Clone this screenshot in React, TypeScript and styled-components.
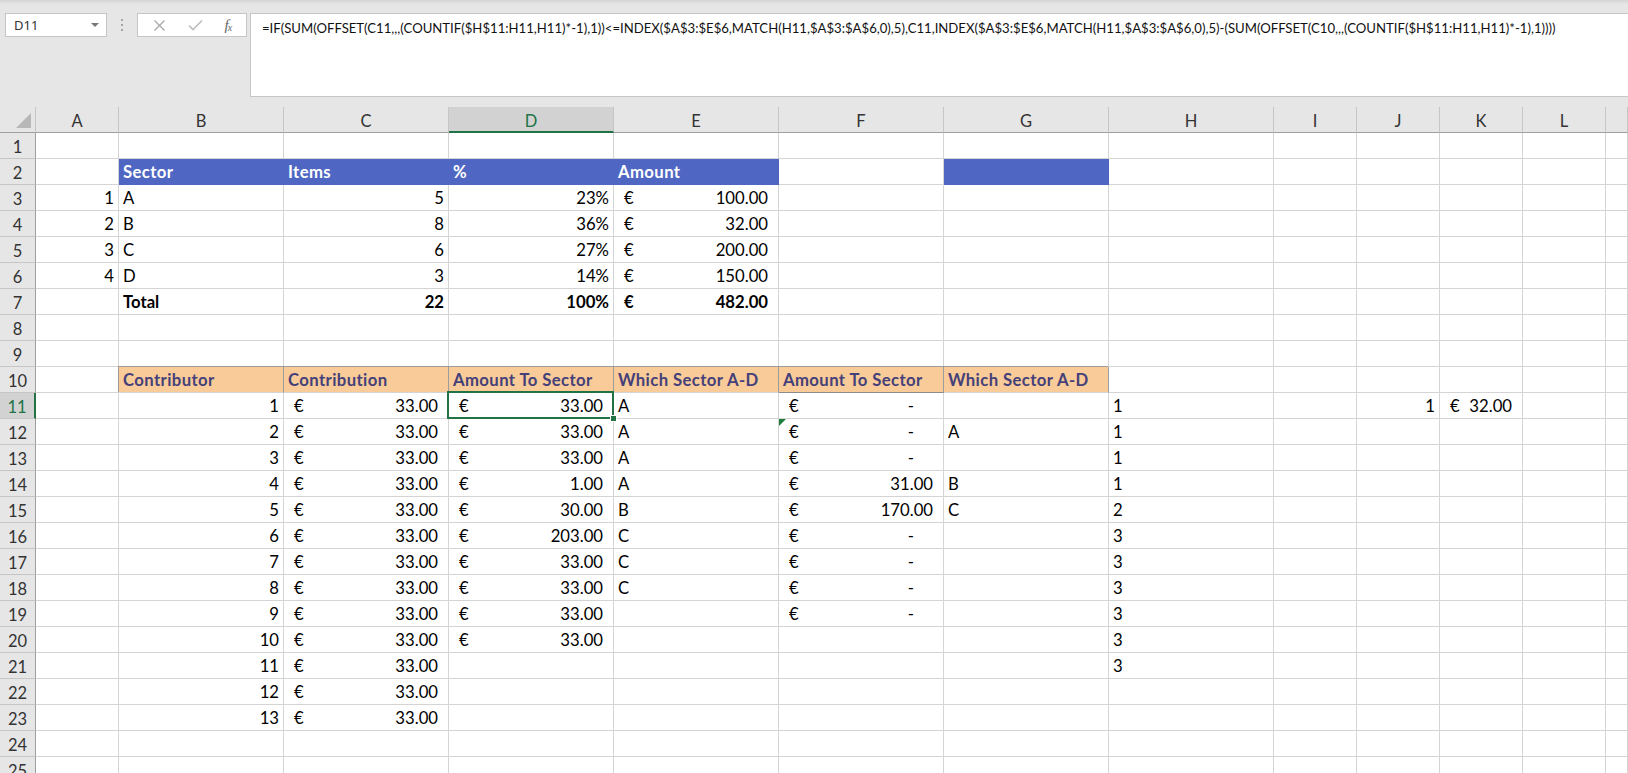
import React from 'react';
import styled, { createGlobalStyle, css } from 'styled-components';

const GlobalStyle = createGlobalStyle`
  html, body {
    margin: 0;
    padding: 0;
    background: #e6e6e6;
  }
  body {
    font-family: Lato, 'Liberation Sans', sans-serif;
  }
`;

const GREEN = '#217346';
const GRID = '#d4d4d4';

const COLUMNS = ['A', 'B', 'C', 'D', 'E', 'F', 'G', 'H', 'I', 'J', 'K', 'L', 'M'];
// M is only a sliver at the right edge of the window
const WIDTHS: Record<string, number> = {
  A: 83, B: 165, C: 165, D: 165, E: 165, F: 165, G: 165, H: 165, I: 83, J: 83, K: 83, L: 83, M: 22,
};
const ROW_COUNT = 25;
const ACTIVE_COL = 'D';
const ACTIVE_ROW = 11;

const FORMULA =
  '=IF(SUM(OFFSET(C11,,,(COUNTIF($H$11:H11,H11)*-1),1))<=INDEX($A$3:$E$6,MATCH(H11,$A$3:$A$6,0),5),C11,INDEX($A$3:$E$6,MATCH(H11,$A$3:$A$6,0),5)-(SUM(OFFSET(C10,,,(COUNTIF($H$11:H11,H11)*-1),1))))';

type Kind = 'text' | 'num' | 'acct' | 'dash';
type Fill = 'blue' | 'orange';

interface CellData {
  v?: string;
  kind?: Kind;
  bold?: boolean;
  fill?: Fill;
  boxed?: boolean;
  flag?: boolean;
}

// sheet content, keyed by row then column
const data: Record<number, Record<string, CellData>> = {
  2: {
    B: { v: 'Sector', bold: true, fill: 'blue' },
    C: { v: 'Items', bold: true, fill: 'blue' },
    D: { v: '%', bold: true, fill: 'blue' },
    E: { v: 'Amount', bold: true, fill: 'blue' },
    G: { fill: 'blue' },
  },
  7: {
    B: { v: 'Total', bold: true },
    C: { v: '22', kind: 'num', bold: true },
    D: { v: '100%', kind: 'num', bold: true },
    E: { v: '482.00', kind: 'acct', bold: true },
  },
  10: {
    B: { v: 'Contributor', bold: true, fill: 'orange' },
    C: { v: 'Contribution', bold: true, fill: 'orange' },
    D: { v: 'Amount To Sector', bold: true, fill: 'orange' },
    E: { v: 'Which Sector A-D', bold: true, fill: 'orange' },
    F: { v: 'Amount To Sector', bold: true, fill: 'orange', boxed: true },
    G: { v: 'Which Sector A-D', bold: true, fill: 'orange' },
  },
};

const sectors = [
  ['A', '5', '23%', '100.00'],
  ['B', '8', '36%', '32.00'],
  ['C', '6', '27%', '200.00'],
  ['D', '3', '14%', '150.00'],
];
sectors.forEach(([s, items, pct, amount], i) => {
  data[3 + i] = {
    A: { v: String(i + 1), kind: 'num' },
    B: { v: s },
    C: { v: items, kind: 'num' },
    D: { v: pct, kind: 'num' },
    E: { v: amount, kind: 'acct' },
  };
});

const toSector = ['33.00', '33.00', '33.00', '1.00', '30.00', '203.00', '33.00', '33.00', '33.00', '33.00'];
const whichSector = ['A', 'A', 'A', 'A', 'B', 'C', 'C', 'C'];
const secondAmount = ['', '', '', '31.00', '170.00', '', '', '', ''];
const secondSector: Record<number, string> = { 12: 'A', 14: 'B', 15: 'C' };
const hValues = ['1', '1', '1', '1', '2', '3', '3', '3', '3', '3', '3'];

for (let r = 11; r <= 23; r += 1) {
  const i = r - 11;
  const row: Record<string, CellData> = {
    B: { v: String(i + 1), kind: 'num' },
    C: { v: '33.00', kind: 'acct' },
  };
  if (toSector[i]) row.D = { v: toSector[i], kind: 'acct' };
  if (whichSector[i]) row.E = { v: whichSector[i] };
  if (i < secondAmount.length) {
    row.F = secondAmount[i]
      ? { v: secondAmount[i], kind: 'acct' }
      : { kind: 'dash', flag: r === 12 };
  }
  if (secondSector[r]) row.G = { v: secondSector[r] };
  if (hValues[i]) row.H = { v: hValues[i] };
  data[r] = row;
}
data[11].J = { v: '1', kind: 'num' };
data[11].K = { v: '32.00', kind: 'acct' };

/* ---------- toolbar ---------- */

const Page = styled.div`
  width: 1628px;
  height: 773px;
  overflow: hidden;
  background: #e6e6e6;
`;

const Toolbar = styled.div`
  height: 107px;
  box-sizing: border-box;
  display: flex;
  align-items: flex-start;
  padding: 13px 0 0 5px;
  background: linear-gradient(#d3d3d3 0, #e2e2e2 3px, #e6e6e6 5px);
`;

const NameBox = styled.div`
  width: 102px;
  height: 24px;
  box-sizing: border-box;
  background: #fff;
  border: 1px solid #c6c6c6;
  display: flex;
  align-items: center;
  justify-content: space-between;
  padding: 0 7px 0 8px;
  font-family: 'Noto Sans', 'Open Sans', sans-serif;
  font-size: 13px;
  color: #333;
`;

const DropArrow = styled.span`
  width: 0;
  height: 0;
  border-left: 4px solid transparent;
  border-right: 4px solid transparent;
  border-top: 4px solid #777;
`;

const Grip = styled.div`
  width: 30px;
  height: 24px;
  display: flex;
  flex-direction: column;
  align-items: center;
  justify-content: center;
  gap: 3px;

  span {
    width: 2px;
    height: 2px;
    background: #a6a6a6;
  }
`;

const ButtonBox = styled.div`
  width: 110px;
  height: 24px;
  box-sizing: border-box;
  background: #fff;
  border: 1px solid #c6c6c6;
  display: flex;
  align-items: center;
  justify-content: space-around;
  padding: 0 4px;
`;

const FxLabel = styled.span`
  font-family: 'Liberation Serif', serif;
  font-style: italic;
  font-size: 15px;
  color: #666;
  letter-spacing: -1px;

  sub {
    font-size: 10px;
    vertical-align: -1px;
  }
`;

const FormulaBox = styled.div`
  flex: 1;
  height: 84px;
  margin-left: 3px;
  box-sizing: border-box;
  background: #fff;
  border: 1px solid #c6c6c6;
  border-right: none;
  padding: 6px 0 0 11px;
  font-size: 13.15px;
  line-height: 16px;
  color: #111;
  white-space: nowrap;
  overflow: hidden;
`;

/* ---------- sheet ---------- */

const Sheet = styled.div`
  display: grid;
  grid-template-columns: 36px ${COLUMNS.map((c) => `${WIDTHS[c]}px`).join(' ')};
  grid-auto-rows: 26px;
  background: #fff;
`;

const headerBase = css`
  box-sizing: border-box;
  display: flex;
  align-items: center;
  justify-content: center;
  font-size: 16.5px;
  background: #e6e6e6;
  color: #333;
`;

const Corner = styled.div`
  ${headerBase};
  position: relative;
  border-right: 1px solid #c6c6c6;
  border-bottom: 1px solid #9f9f9f;

  &::after {
    content: '';
    position: absolute;
    right: 4px;
    bottom: 4px;
    width: 0;
    height: 0;
    border-left: 15px solid transparent;
    border-bottom: 15px solid #b7b7b7;
  }
`;

const ColHeader = styled.div<{ $active?: boolean }>`
  ${headerBase};
  border-right: 1px solid #c6c6c6;
  border-bottom: 1px solid #9f9f9f;
  padding-top: 2px;
  ${(p) =>
    p.$active &&
    css`
      background: #d2d2d2;
      color: ${GREEN};
      border-bottom: 2px solid ${GREEN};
      padding-top: 3px;
    `}
`;

const RowHeader = styled.div<{ $active?: boolean }>`
  ${headerBase};
  border-right: 1px solid #9f9f9f;
  border-bottom: 1px solid #c6c6c6;
  padding-top: 3px;
  ${(p) =>
    p.$active &&
    css`
      background: #d2d2d2;
      color: ${GREEN};
      border-right: 2px solid ${GREEN};
    `}
`;

const fills: Record<Fill, { bg: string; color: string }> = {
  blue: { bg: '#4f67c3', color: '#ffffff' },
  orange: { bg: '#f8cb98', color: '#45407a' },
};

const Cell = styled.div<{
  $kind: Kind;
  $bold?: boolean;
  $fill?: Fill;
  $boxed?: boolean;
  $selected?: boolean;
  $flag?: boolean;
}>`
  box-sizing: border-box;
  display: flex;
  align-items: flex-end;
  justify-content: ${(p) => (p.$kind === 'num' ? 'flex-end' : p.$kind === 'text' ? 'flex-start' : 'space-between')};
  padding: ${(p) => (p.$kind === 'acct' || p.$kind === 'dash' ? '0 10px 2px 10px' : '0 4px 2px 4px')};
  border-right: 1px solid ${GRID};
  border-bottom: 1px solid ${GRID};
  font-size: 16.7px;
  line-height: 20px;
  font-weight: ${(p) => (p.$bold ? 700 : 400)};
  letter-spacing: ${(p) => (p.$bold && p.$fill ? '0.4px' : '0')};
  color: #000;
  white-space: nowrap;
  overflow: hidden;

  ${(p) =>
    p.$fill === 'blue' &&
    css`
      background: ${fills.blue.bg};
      color: ${fills.blue.color};
      border-color: ${fills.blue.bg};
    `}

  ${(p) =>
    p.$fill === 'orange' &&
    css`
      background: ${fills.orange.bg};
      color: ${fills.orange.color};
      border-right-color: #9c9c9c;
      box-shadow: -1px -1px 0 #9c9c9c;
      overflow: visible;
    `}

  ${(p) =>
    p.$boxed &&
    css`
      border-bottom-color: #8c8c8c;
    `}

  ${(p) =>
    (p.$selected || p.$flag) &&
    css`
      position: relative;
      overflow: visible;
    `}

  ${(p) =>
    p.$selected &&
    css`
      z-index: 2;
      &::after {
        content: '';
        position: absolute;
        left: -2px;
        top: -2px;
        right: -1px;
        bottom: -1px;
        border: 2px solid ${GREEN};
        pointer-events: none;
      }
      &::before {
        content: '';
        position: absolute;
        right: -4px;
        bottom: -4px;
        width: 5px;
        height: 5px;
        background: ${GREEN};
        border: 1px solid #fff;
        z-index: 3;
      }
    `}

  ${(p) =>
    p.$flag &&
    css`
      &::before {
        content: '';
        position: absolute;
        left: 0;
        top: 0;
        width: 0;
        height: 0;
        border-top: 7px solid #1e7e3e;
        border-right: 7px solid transparent;
      }
    `}
`;

const Dash = styled.span`
  padding-right: 19px;
`;

const XIcon = () => (
  <svg width="13" height="13" viewBox="0 0 13 13">
    <path d="M1.5 1.5 L11.5 11.5 M11.5 1.5 L1.5 11.5" stroke="#a8a8a8" strokeWidth="1.3" fill="none" />
  </svg>
);

const CheckIcon = () => (
  <svg width="15" height="12" viewBox="0 0 15 12">
    <path d="M1 6.5 L5 10.5 L14 1.5" stroke="#bdbdbd" strokeWidth="1.6" fill="none" />
  </svg>
);

const renderCell = (col: string, row: number) => {
  const cell = data[row]?.[col] ?? {};
  const kind: Kind = cell.kind ?? 'text';
  return (
    <Cell
      key={`${col}${row}`}
      $kind={kind}
      $bold={cell.bold}
      $fill={cell.fill}
      $boxed={cell.boxed}
      $flag={cell.flag}
      $selected={col === ACTIVE_COL && row === ACTIVE_ROW}
    >
      {kind === 'acct' && (
        <>
          <span>€</span>
          <span>{cell.v}</span>
        </>
      )}
      {kind === 'dash' && (
        <>
          <span>€</span>
          <Dash>-</Dash>
        </>
      )}
      {(kind === 'text' || kind === 'num') && cell.v}
    </Cell>
  );
};

export default function App() {
  const rows = Array.from({ length: ROW_COUNT }, (_, i) => i + 1);

  return (
    <Page>
      <GlobalStyle />
      <Toolbar>
        <NameBox>
          D11
          <DropArrow />
        </NameBox>
        <Grip>
          <span />
          <span />
          <span />
        </Grip>
        <ButtonBox>
          <XIcon />
          <CheckIcon />
          <FxLabel>
            f<sub>x</sub>
          </FxLabel>
        </ButtonBox>
        <FormulaBox>{FORMULA}</FormulaBox>
      </Toolbar>
      <Sheet>
        <Corner />
        {COLUMNS.map((c) => (
          <ColHeader key={c} $active={c === ACTIVE_COL}>
            {WIDTHS[c] > 40 ? c : null}
          </ColHeader>
        ))}
        {rows.map((r) => (
          <React.Fragment key={r}>
            <RowHeader $active={r === ACTIVE_ROW}>{r}</RowHeader>
            {COLUMNS.map((c) => renderCell(c, r))}
          </React.Fragment>
        ))}
      </Sheet>
    </Page>
  );
}
